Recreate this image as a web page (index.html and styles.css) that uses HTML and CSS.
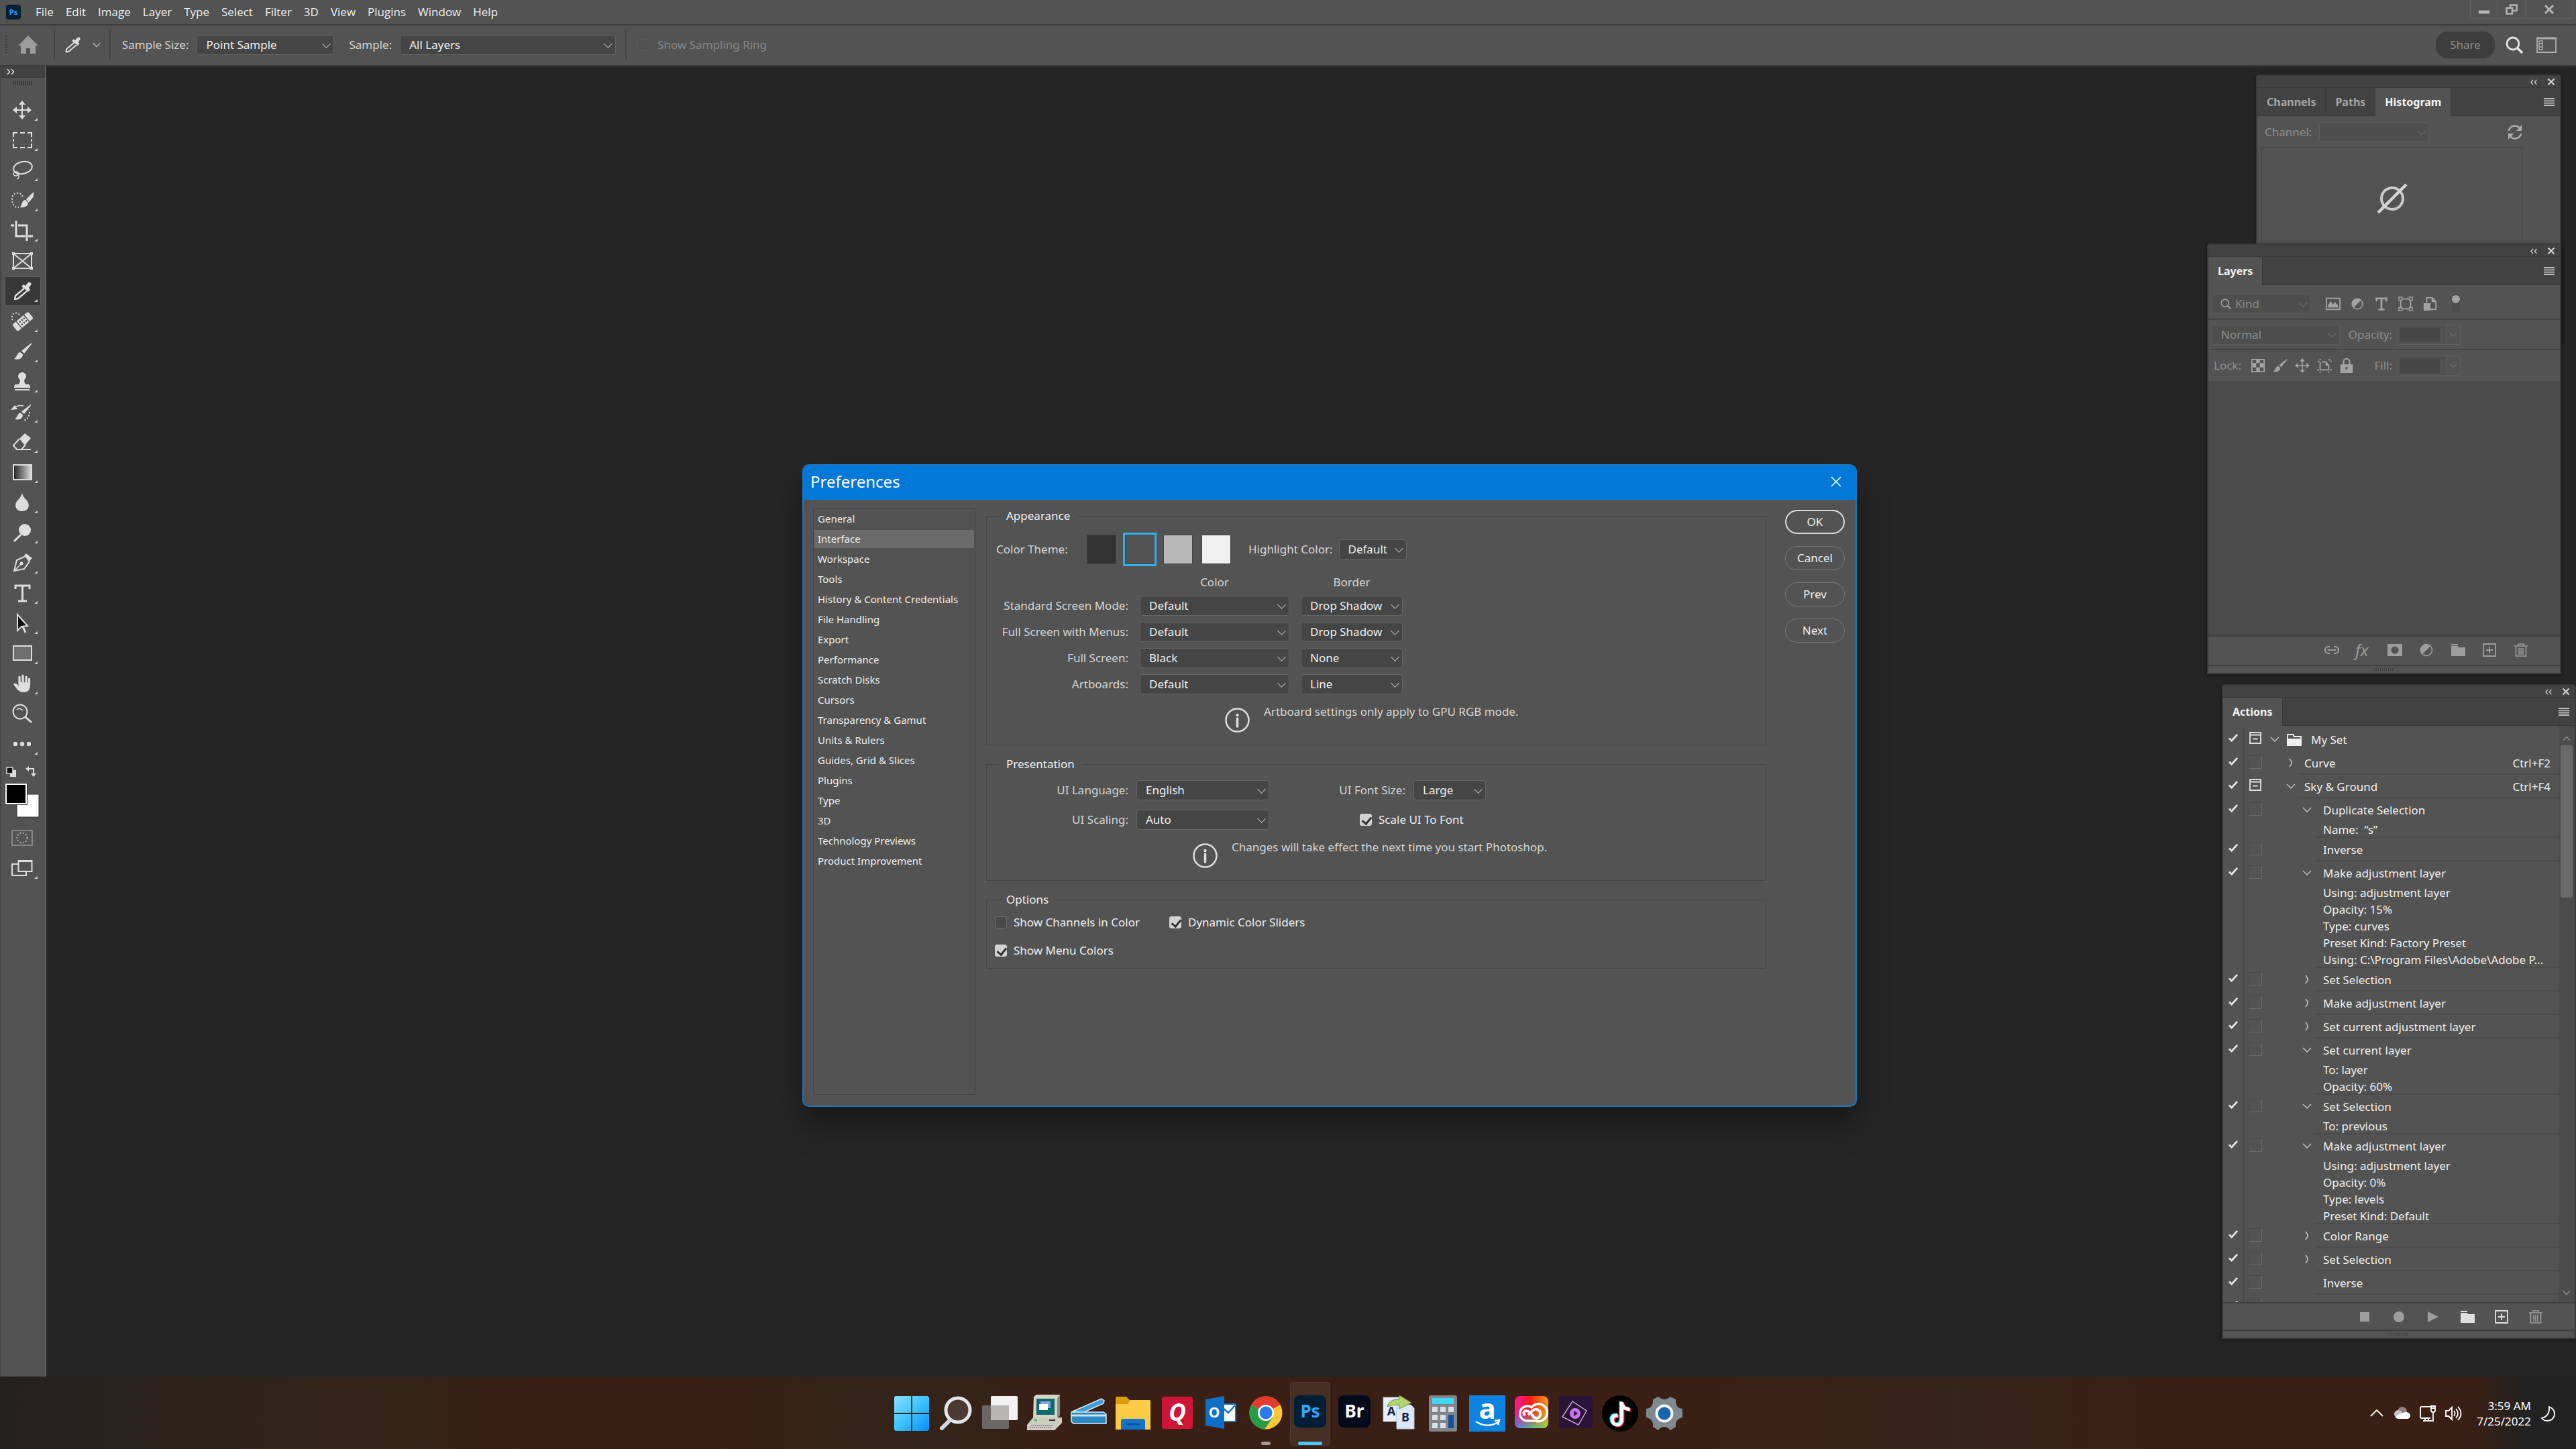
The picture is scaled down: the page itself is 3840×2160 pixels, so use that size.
FILE: index.html
```html
<!DOCTYPE html>
<html lang="en">
<head>
    <meta charset="UTF-8">
    <meta name="viewport" content="width=device-width, initial-scale=1.0">
    <title>Photoshop - Preferences</title>
    <link rel="stylesheet" href="styles.css">
</head>
<body>
    <!-- Shared icons -->
    <svg class="sprite" aria-hidden="true">
        <symbol id="i-eyedropper" viewBox="0 0 30 28">
            <path d="M18 10 5 21l-1 5 5-1L22 14" fill="none" stroke="currentColor" stroke-width="2.4" stroke-linejoin="round"/>
            <path d="M14 7l3-3 3 2 3-4c3-3 7 0 5 3l-3 4 2 3-3 3z" fill="currentColor"/>
        </symbol>
        <symbol id="i-tick" viewBox="0 0 16 14">
            <path d="M1 8l4 4L14 2" fill="none" stroke="currentColor" stroke-width="3"/>
        </symbol>
        <symbol id="i-close" viewBox="0 0 16 16">
            <path d="M2 2l12 12M14 2 2 14" fill="none" stroke="currentColor" stroke-width="3"/>
        </symbol>
        <symbol id="i-collapse" viewBox="0 0 12 10">
            <path d="M5 1 1.500 5 5 9M11 1 7.500 5 11 9" fill="none" stroke="currentColor" stroke-width="1.500"/>
        </symbol>
        <symbol id="i-menu" viewBox="0 0 16 12">
            <path d="M0 1h16M0 4.300h16M0 7.600h16M0 11h16" stroke="currentColor" stroke-width="1.800"/>
        </symbol>
        <symbol id="i-half" viewBox="0 0 24 24">
            <circle cx="12" cy="12" r="8.500" fill="none" stroke="currentColor" stroke-width="1.600"/>
            <path d="M18 6A8.500 8.500 0 1 0 6 18z" fill="currentColor"/>
        </symbol>
        <symbol id="i-folder" viewBox="0 0 24 24">
            <path d="M2 4h10" stroke="currentColor" stroke-width="2"/>
            <path d="M2 6h10l1 2h10v13H2z" fill="currentColor"/>
        </symbol>
        <symbol id="i-new" viewBox="0 0 24 24">
            <path d="M3 3h18v18H3zM12 7v10M7 12h10" fill="none" stroke="currentColor" stroke-width="1.800"/>
        </symbol>
        <symbol id="i-trash" viewBox="0 0 24 24">
            <path d="M2 6h20M8 6V3h8v3M4.500 6v15h15V6M9 9v10M12 9v10M15 9v10" fill="none" stroke="currentColor" stroke-width="1.600"/>
        </symbol>
        <symbol id="i-brush" viewBox="0 0 28 28">
            <path d="M27 1 12 13l4 4L27 3zM10 15c-5 1-4 7-9 10 6 2 13 0 13-7z" fill="currentColor"/>
        </symbol>
        <symbol id="i-move" viewBox="0 0 28 28">
            <path d="M14 4v20M4 14h20" stroke="currentColor" stroke-width="2"/>
            <path d="M14 0l5 6H9zM14 28l5-6H9zM0 14l6-5v10zM28 14l-6-5v10z" fill="currentColor"/>
        </symbol>
        <symbol id="i-info" viewBox="0 0 37 37">
            <circle cx="18.500" cy="18.500" r="17" fill="none" stroke="currentColor" stroke-width="2.500"/>
            <circle cx="18.500" cy="11" r="2.200" fill="currentColor"/>
            <path d="M18.500 16v12" stroke="currentColor" stroke-width="3.600" stroke-linecap="round"/>
        </symbol>
        <symbol id="i-search" viewBox="0 0 26 26">
            <circle cx="11" cy="11" r="9" fill="none" stroke="currentColor" stroke-width="2.800"/>
            <path d="M17 17l8 8" stroke="currentColor" stroke-width="3.400"/>
        </symbol>
        <symbol id="i-down" viewBox="0 0 14 8">
            <path d="M1 1l6 6 6-6" fill="none" stroke="currentColor" stroke-width="1.300"/>
        </symbol>
        <symbol id="i-right" viewBox="0 0 14 14">
            <path d="M5 1c4 5 4 7 0 12" fill="none" stroke="currentColor" stroke-width="1.500"/>
        </symbol>
        <symbol id="i-dialog" viewBox="0 0 18 18">
            <path d="M1 1h16v16H1zM1 4.500h16M5.500 10.500h7" fill="none" stroke="currentColor" stroke-width="1.800"/>
        </symbol>
    </svg>

    <div class="desktop">
        <header class="titlebar">
            <svg class="app-logo" viewBox="0 0 22 22"><rect width="22" height="22" rx="4" fill="#001e36"/><text x="11" y="15" text-anchor="middle" class="logo-text" font-size="11" fill="#31a8ff">Ps</text></svg>
            <nav class="menu">
                <a href="#">File</a><a href="#">Edit</a><a href="#">Image</a><a href="#">Layer</a><a href="#">Type</a><a href="#">Select</a><a href="#">Filter</a><a href="#">3D</a><a href="#">View</a><a href="#">Plugins</a><a href="#">Window</a><a href="#">Help</a>
            </nav>
            <div class="window-buttons">
                <button type="button" aria-label="Minimize"><svg width="16" height="16" viewBox="0 0 16 16"><path d="M0 12h16" stroke="currentColor" stroke-width="5"/></svg></button>
                <button type="button" aria-label="Restore"><svg width="18" height="16" viewBox="0 0 18 16"><path d="M7 6V1.500h9.500V10H11M1.500 6H10v8.500H1.500z" fill="none" stroke="currentColor" stroke-width="2.600"/></svg></button>
                <button type="button" class="wide" aria-label="Close"><svg width="16" height="16"><use href="#i-close"/></svg></button>
            </div>
        </header>

        <div class="optionsbar">
            <span class="grip-v"></span>
            <button type="button" class="home" aria-label="Home"><svg width="30" height="28" viewBox="0 0 30 28"><path d="M15 0 30 15h-4v12h-8v-8h-6v8H4V15H0z" fill="#9b9b9b"/></svg></button>
            <span class="divider"></span>
            <button type="button" class="current-tool" aria-label="Eyedropper tool presets">
                <svg width="26" height="26"><use href="#i-eyedropper"/></svg>
                <svg width="12" height="8"><use href="#i-down"/></svg>
            </button>
            <span class="divider"></span>
            <label for="sample-size" class="first-label">Sample Size:</label>
            <span class="select w-size"><select id="sample-size"><option>Point Sample</option></select></span>
            <label for="sample" class="second-label">Sample:</label>
            <span class="select w-sample"><select id="sample"><option>All Layers</option></select></span>
            <span class="divider"></span>
            <label class="check muted"><input type="checkbox" disabled>Show Sampling Ring</label>
            <div class="options-right">
                <button type="button" class="share" disabled>Share</button>
                <button type="button" aria-label="Search"><svg width="26" height="26"><use href="#i-search"/></svg></button>
                <button type="button" class="ws" aria-label="Workspace"><svg width="30" height="24" viewBox="0 0 30 24"><path d="M1 2h28v21H1z" fill="none" stroke="currentColor" stroke-width="1.800"/><path d="M0 2h30" stroke="currentColor" stroke-width="3"/><path d="M4 6h5v13H4zM4 10h5M4 15h5" fill="none" stroke="currentColor" stroke-width="1.500"/></svg></button>
            </div>
        </div>

        <main class="workspace">
            <aside class="toolbar">
                <div class="toolbar-head"><svg width="12" height="10" viewBox="0 0 12 10"><path d="M1 1l3.500 4L1 9M7 1l3.500 4L7 9" fill="none" stroke="#e0e0e0" stroke-width="1.500"/></svg></div>
                <div class="grip-h"></div>
                <div class="tools">
                    <button type="button" class="tool" aria-label="Move"><svg viewBox="0 0 54 44"><use href="#i-move" x="12" y="8" width="28" height="28"/></svg></button>
                    <button type="button" class="tool" aria-label="Rectangular Marquee"><svg viewBox="0 0 54 44"><path d="M19 11h-6v6M23 11h7M34 11h6v6M40 20v4M40 27v6h-6M30 33h-7M19 33h-6v-6M13 24v-4" class="line"/></svg></button>
                    <button type="button" class="tool" aria-label="Lasso"><svg viewBox="0 0 54 44"><ellipse cx="27" cy="18" rx="14" ry="9" transform="rotate(-12 27 18)" class="line"/><ellipse cx="17" cy="27" rx="4" ry="3" class="line thin"/><path d="M14 24l7 5q1 5-3 6" class="line thin"/></svg></button>
                    <button type="button" class="tool" aria-label="Quick Selection"><svg viewBox="0 0 54 44"><path d="M27 16c-2-4-5-6-9-5-6 1-7 5-7 10s3 12 10 11" class="line dots"/><path d="M43 9 32 20l4 5 7-9zM31 21c-6 1-5 7-8 11 7 1 12-2 12-7z" fill="currentColor"/></svg></button>
                    <button type="button" class="tool" aria-label="Crop"><svg viewBox="0 0 54 44"><path d="M9 14h5M17 7v23h14M35 30h7M20 14h13v23" class="line thick"/></svg></button>
                    <button type="button" class="tool plain" aria-label="Frame"><svg viewBox="0 0 54 44"><path d="M13 11h27v22H13zM13 11l27 22M40 11 13 33" class="line"/><path d="M11 9h4v4h-4zM38 9h4v4h-4zM11 31h4v4h-4zM38 31h4v4h-4z" fill="currentColor"/></svg></button>
                    <button type="button" class="tool active" aria-label="Eyedropper"><svg viewBox="0 0 54 44"><use href="#i-eyedropper" x="11" y="8" width="30" height="28"/></svg></button>
                    <button type="button" class="tool" aria-label="Spot Healing Brush"><svg viewBox="0 0 54 44"><path d="M22 12c-4-5-12-2-11 4 0 2 0 4 2 6" class="line dots"/><g transform="rotate(-40 27 23)"><rect x="12" y="16" width="31" height="13" rx="3" fill="currentColor"/><path d="M20 15v15M35 15v15" stroke="#535353" stroke-width="1.500"/><path d="M23 20h10M23 25h10" stroke="#444" stroke-width="2.500" stroke-dasharray="2 2"/></g></svg></button>
                    <button type="button" class="tool" aria-label="Brush"><svg viewBox="0 0 54 44"><use href="#i-brush" x="13" y="8" width="28" height="28"/></svg></button>
                    <button type="button" class="tool" aria-label="Clone Stamp"><svg viewBox="0 0 54 44"><circle cx="26" cy="14" r="6" fill="currentColor"/><path d="M23 18h6q0 7 3 8h4q2 1 2 5H14q0-4 2-5h4q3-1 3-8z" fill="currentColor"/><path d="M15 34h22" class="line"/></svg></button>
                    <button type="button" class="tool" aria-label="History Brush"><svg viewBox="0 0 54 44"><path d="M9 19l6-7 4 6z" fill="currentColor"/><path d="M14 16q6-5 14-3" class="line thin"/><path d="M37 22q0 9-8 13" class="line dots"/><use href="#i-brush" x="14" y="9" width="26" height="27"/></svg></button>
                    <button type="button" class="tool" aria-label="Eraser"><svg viewBox="0 0 54 44"><path d="M22 17l8-8 9 7-9 11z" fill="currentColor"/><path d="M22 17 13 27l5 6h7l6-7M20 33h19" class="line"/></svg></button>
                    <button type="button" class="tool" aria-label="Gradient"><svg viewBox="0 0 54 44"><defs><linearGradient id="tool-grad"><stop offset="0" stop-color="#222"/><stop offset="1" stop-color="#ddd"/></linearGradient></defs><path d="M13 11h27v22H13z" fill="url(#tool-grad)" stroke="currentColor" stroke-width="2"/></svg></button>
                    <button type="button" class="tool" aria-label="Blur"><svg viewBox="0 0 54 44"><path d="M26 8q1 5 6 10c7 7 4 17-6 17s-13-10-6-17q5-5 6-10z" fill="currentColor"/></svg></button>
                    <button type="button" class="tool" aria-label="Dodge"><svg viewBox="0 0 54 44"><circle cx="30" cy="18" r="9" fill="currentColor"/><path d="M24 25 14 35" class="line thick"/></svg></button>
                    <button type="button" class="tool" aria-label="Pen"><svg viewBox="0 0 54 44"><path d="M14 34l4-16 13-6 6 8-8 11z" class="line"/><path d="M14 34l10-10" class="line thin"/><circle cx="25" cy="23" r="2.500" fill="currentColor"/><path d="M32 8l9 7-4 4-8-8z" fill="currentColor"/></svg></button>
                    <button type="button" class="tool" aria-label="Type"><svg viewBox="0 0 54 44"><path d="M16 16v-5h21v5M26.500 11v22M20 34h13" class="line thick"/></svg></button>
                    <button type="button" class="tool" aria-label="Path Selection"><svg viewBox="0 0 54 44"><path d="M19 9v24l6-6 9-1z" fill="#111" stroke="currentColor" stroke-width="2"/><path d="M27 27l4 9" class="line thick"/></svg></button>
                    <button type="button" class="tool" aria-label="Rectangle"><svg viewBox="0 0 54 44"><path d="M13 11h27v21H13z" fill="#6e6e6e" stroke="currentColor" stroke-width="2"/></svg></button>
                    <button type="button" class="tool" aria-label="Hand"><svg viewBox="0 0 54 44"><path d="M22 23V12M27 21V10M32 22V12M36.500 24v-9" stroke="currentColor" stroke-width="3.200" stroke-linecap="round"/><path d="M38 21c0 8-1 14-10 14-8 0-11-7-15-12 1-2 4-2 8 2v-6z" fill="currentColor"/></svg></button>
                    <button type="button" class="tool plain" aria-label="Zoom"><svg viewBox="0 0 54 44"><circle cx="23" cy="19" r="10.500" class="line"/><path d="M18 16q4-4 9 1" class="line thin"/><path d="M30 26l10 9" class="line thick"/></svg></button>
                    <button type="button" class="tool" aria-label="Edit Toolbar"><svg viewBox="0 0 54 44"><circle cx="16" cy="22" r="3.200" fill="currentColor"/><circle cx="26" cy="22" r="3.200" fill="currentColor"/><circle cx="36" cy="22" r="3.200" fill="currentColor"/></svg></button>
                </div>
                <svg class="swatches" viewBox="0 0 54 90" role="img" aria-label="Foreground and background colors">
                    <path d="M8 2h9v10H8z" fill="#ddd"/><path d="M3-2h9v9H3z" fill="#111" stroke="#ddd" stroke-width="1.500"/>
                    <path d="M34 0h9v10" fill="none" stroke="#ddd" stroke-width="2"/><path d="M31 0l5-4v8zM43 12l-4-5h8z" fill="#ddd"/>
                    <path d="M18 38h33v34H18z" fill="#fff" stroke="#333" stroke-width="1"/>
                    <path d="M0 21h34v33H0z" fill="#333"/><path d="M2 23h30v29H2z" fill="#000" stroke="#fff" stroke-width="2"/>
                </svg>
                <div class="modes">
                    <button type="button" class="tool plain" aria-label="Quick Mask"><svg viewBox="0 0 54 44"><path d="M11 11h30v22H11z" fill="none" stroke="#999" stroke-width="1.500"/><circle cx="26" cy="22" r="7.500" fill="none" stroke="#bbb" stroke-width="1.800" stroke-dasharray="2 2.500"/></svg></button>
                    <button type="button" class="tool" aria-label="Screen Mode"><svg viewBox="0 0 54 44"><path d="M20 16h-9v17h21v-6" class="line"/><path d="M20.500 11h20v16h-20zM20 12h21" class="line"/></svg></button>
                </div>
            </aside>

            <section class="panel histogram">
                <div class="panel-head"><svg width="12" height="9"><use href="#i-collapse"/></svg><svg width="12" height="12"><use href="#i-close"/></svg></div>
                <div class="tabs">
                    <button type="button">Channels</button><button type="button">Paths</button><button type="button" class="current">Histogram</button>
                    <svg class="panel-menu" width="16" height="12"><use href="#i-menu"/></svg>
                </div>
                <div class="histogram-row">
                    <label for="channel">Channel:</label>
                    <span class="select off w-channel"><select id="channel" disabled></select></span>
                    <svg class="refresh" width="22" height="22" viewBox="0 0 22 22"><path d="M2 9a9 9 0 0 1 16-4M20 13a9 9 0 0 1-16 4" fill="none" stroke="currentColor" stroke-width="2.500"/><path d="M21 0v9h-8zM1 22v-9h8z" fill="currentColor"/></svg>
                </div>
                <div class="graph"><svg width="46" height="46" viewBox="0 0 46 46"><circle cx="23" cy="23" r="16" fill="none" stroke="#c9c9c9" stroke-width="4"/><path d="M2 44 44 2" stroke="#d4d4d4" stroke-width="4.500"/></svg></div>
            </section>

            <section class="panel layers">
                <div class="panel-head"><svg width="12" height="9"><use href="#i-collapse"/></svg><svg width="12" height="12"><use href="#i-close"/></svg></div>
                <div class="tabs">
                    <button type="button" class="current">Layers</button>
                    <svg class="panel-menu" width="16" height="12"><use href="#i-menu"/></svg>
                </div>
                <div class="layer-row filter">
                    <span class="select off w-kind"><svg class="kind-icon" width="16" height="16"><use href="#i-search"/></svg><select aria-label="Filter type" disabled><option>Kind</option></select></span>
                    <div class="filter-icons">
                        <svg viewBox="0 0 24 24"><path d="M1 3h22v18H1z" fill="none" stroke="currentColor" stroke-width="2"/><path d="M4 18v-4l4-6 4 5 3-4 5 6v3z" fill="currentColor"/></svg>
                        <svg viewBox="0 0 24 24"><use href="#i-half"/></svg>
                        <svg viewBox="0 0 24 24"><path d="M4 8V3h16v5M12 3v18M7 21h10" fill="none" stroke="currentColor" stroke-width="3"/></svg>
                        <svg viewBox="0 0 24 24"><path d="M4 4h16v16H4z" fill="none" stroke="currentColor" stroke-width="2"/><path d="M1 1h5v5H1zM18 1h5v5h-5zM1 18h5v5H1zM18 18h5v5h-5z" fill="#535353" stroke="currentColor" stroke-width="1.500"/></svg>
                        <svg viewBox="0 0 24 24"><path d="M7 10V2h9l6 6v13H13" fill="none" stroke="currentColor" stroke-width="2"/><path d="M15 2v7h7M2 11h11v12H2z" fill="currentColor"/></svg>
                    </div>
                    <span class="toggle"></span>
                </div>
                <div class="layer-row">
                    <span class="select off w-blend"><select aria-label="Blend mode" disabled><option>Normal</option></select></span>
                    <div class="field"><label for="opacity">Opacity:</label><span class="stepper"><input id="opacity" type="text" disabled><svg width="12" height="8"><use href="#i-down"/></svg></span></div>
                </div>
                <div class="layer-row lock">
                    <span class="lock-label">Lock:</span>
                    <div class="lock-icons">
                        <svg viewBox="0 0 24 24"><path d="M2 2h20v20H2z" fill="none" stroke="currentColor" stroke-width="2"/><path d="M9 2h6v6H9zM3 8h6v7H3zM15 8h6v7h-6zM9 15h6v7H9z" fill="currentColor"/></svg>
                        <svg viewBox="0 0 24 24"><use href="#i-brush"/></svg>
                        <svg viewBox="0 0 24 24"><use href="#i-move"/></svg>
                        <svg viewBox="0 0 24 24"><path d="M1 5h3M5 1v2M5 6v13h14v-7l-5-6H8M20 1v3M22 5h2M5 22v2M19 22v2M0 19h3M21 19h3" fill="none" stroke="currentColor" stroke-width="2"/><path d="M14 5v7h6z" fill="currentColor"/></svg>
                        <svg viewBox="0 0 24 24"><path d="M7 11V6a5 5 0 0 1 10 0v5" fill="none" stroke="currentColor" stroke-width="2.500"/><path d="M2 10h20v14H2z" fill="currentColor"/><circle cx="12" cy="16" r="2" fill="#535353"/></svg>
                    </div>
                    <div class="field"><label for="fill">Fill:</label><span class="stepper"><input id="fill" type="text" disabled><svg width="12" height="8"><use href="#i-down"/></svg></span></div>
                </div>
                <div class="layer-list"></div>
                <div class="panel-foot">
                    <svg viewBox="0 0 24 24"><path d="M9 7H7a5 5 0 0 0 0 10h2M15 7h2a5 5 0 0 1 0 10h-2M6 12h12" fill="none" stroke="currentColor" stroke-width="2.200"/></svg>
                    <span class="fx">fx</span>
                    <svg viewBox="0 0 24 24"><path d="M1 3h22v18H1z" fill="currentColor"/><circle cx="12" cy="12" r="5.500" fill="#535353"/></svg>
                    <svg viewBox="0 0 24 24"><use href="#i-half"/></svg>
                    <svg viewBox="0 0 24 24"><use href="#i-folder"/></svg>
                    <svg viewBox="0 0 24 24"><use href="#i-new"/></svg>
                    <svg viewBox="0 0 24 24"><use href="#i-trash"/></svg>
                </div>
                <div class="panel-grip"></div>
            </section>

            <section class="panel actions">
                <div class="panel-head"><svg width="12" height="9"><use href="#i-collapse"/></svg><svg width="12" height="12"><use href="#i-close"/></svg></div>
                <div class="tabs">
                    <button type="button" class="current">Actions</button>
                    <svg class="panel-menu" width="16" height="12"><use href="#i-menu"/></svg>
                </div>
                <div class="actions-body">
                    <ul class="action-list">
                        <li class="set"><span class="on"><svg><use href="#i-tick"/></svg></span><span class="dlg"><svg><use href="#i-dialog"/></svg></span><svg class="caret"><use href="#i-down"/></svg><div class="step"><div class="name"><svg class="set-folder" viewBox="0 0 22 18"><path d="M1 8V1h8l2 3h10v4" fill="none" stroke="currentColor" stroke-width="1.800"/><path d="M0 7h22v11H0z" fill="currentColor"/></svg>My Set</div></div></li>
                        <li class="action"><span class="on"><svg><use href="#i-tick"/></svg></span><span class="dlg"><i></i></span><svg class="caret"><use href="#i-right"/></svg><div class="step"><div class="name">Curve<kbd>Ctrl+F2</kbd></div></div></li>
                        <li class="action"><span class="on"><svg><use href="#i-tick"/></svg></span><span class="dlg"><svg><use href="#i-dialog"/></svg></span><svg class="caret"><use href="#i-down"/></svg><div class="step"><div class="name">Sky &amp; Ground<kbd>Ctrl+F4</kbd></div></div></li>
                        <li><span class="on"><svg><use href="#i-tick"/></svg></span><span class="dlg"><i></i></span><svg class="caret"><use href="#i-down"/></svg><div class="step"><div class="name">Duplicate Selection</div><p>Name:&nbsp; “s”</p></div></li>
                        <li><span class="on"><svg><use href="#i-tick"/></svg></span><span class="dlg"><i></i></span><svg class="caret"></svg><div class="step"><div class="name">Inverse</div></div></li>
                        <li><span class="on"><svg><use href="#i-tick"/></svg></span><span class="dlg"><i></i></span><svg class="caret"><use href="#i-down"/></svg><div class="step"><div class="name">Make adjustment layer</div><p>Using: adjustment layer</p><p>Opacity: 15%</p><p>Type: curves</p><p>Preset Kind: Factory Preset</p><p>Using: C:\Program Files\Adobe\Adobe P...</p></div></li>
                        <li><span class="on"><svg><use href="#i-tick"/></svg></span><span class="dlg"><i></i></span><svg class="caret"><use href="#i-right"/></svg><div class="step"><div class="name">Set Selection</div></div></li>
                        <li><span class="on"><svg><use href="#i-tick"/></svg></span><span class="dlg"><i></i></span><svg class="caret"><use href="#i-right"/></svg><div class="step"><div class="name">Make adjustment layer</div></div></li>
                        <li><span class="on"><svg><use href="#i-tick"/></svg></span><span class="dlg"><i></i></span><svg class="caret"><use href="#i-right"/></svg><div class="step"><div class="name">Set current adjustment layer</div></div></li>
                        <li><span class="on"><svg><use href="#i-tick"/></svg></span><span class="dlg"><i></i></span><svg class="caret"><use href="#i-down"/></svg><div class="step"><div class="name">Set current layer</div><p>To: layer</p><p>Opacity: 60%</p></div></li>
                        <li><span class="on"><svg><use href="#i-tick"/></svg></span><span class="dlg"><i></i></span><svg class="caret"><use href="#i-down"/></svg><div class="step"><div class="name">Set Selection</div><p>To: previous</p></div></li>
                        <li><span class="on"><svg><use href="#i-tick"/></svg></span><span class="dlg"><i></i></span><svg class="caret"><use href="#i-down"/></svg><div class="step"><div class="name">Make adjustment layer</div><p>Using: adjustment layer</p><p>Opacity: 0%</p><p>Type: levels</p><p>Preset Kind: Default</p></div></li>
                        <li><span class="on"><svg><use href="#i-tick"/></svg></span><span class="dlg"><i></i></span><svg class="caret"><use href="#i-right"/></svg><div class="step"><div class="name">Color Range</div></div></li>
                        <li><span class="on"><svg><use href="#i-tick"/></svg></span><span class="dlg"><i></i></span><svg class="caret"><use href="#i-right"/></svg><div class="step"><div class="name">Set Selection</div></div></li>
                        <li><span class="on"><svg><use href="#i-tick"/></svg></span><span class="dlg"><i></i></span><svg class="caret"></svg><div class="step"><div class="name">Inverse</div></div></li>
                        <li><span class="on"><svg><use href="#i-tick"/></svg></span><span class="dlg"><i></i></span><svg class="caret"></svg><div class="step"><div class="name">Make adjustment layer</div></div></li>
                    </ul>
                    <div class="scrollbar">
                        <svg class="up" width="12" height="8"><use href="#i-down"/></svg>
                        <div class="thumb"></div>
                        <svg width="12" height="8"><use href="#i-down"/></svg>
                    </div>
                </div>
                <div class="panel-foot">
                    <svg viewBox="0 0 24 24"><path d="M5 5h14v14H5z" fill="currentColor"/></svg>
                    <svg viewBox="0 0 24 24"><circle cx="12" cy="12" r="8" fill="currentColor"/></svg>
                    <svg viewBox="0 0 24 24"><path d="M4 4l16 8-16 8z" fill="currentColor"/></svg>
                    <svg class="bright" viewBox="0 0 24 24"><use href="#i-folder"/></svg>
                    <svg class="bright" viewBox="0 0 24 24"><use href="#i-new"/></svg>
                    <svg viewBox="0 0 24 24"><use href="#i-trash"/></svg>
                </div>
                <div class="panel-grip"></div>
            </section>

            <section class="dialog" role="dialog" aria-labelledby="dialog-title">
                <div class="dialog-title">
                    <h1 id="dialog-title">Preferences</h1>
                    <button type="button" aria-label="Close"><svg width="16" height="16" viewBox="0 0 16 16"><path d="M1 1l14 14M15 1 1 15" stroke="#fff" stroke-width="1.500"/></svg></button>
                </div>
                <div class="dialog-body">
                    <nav class="pages">
                        <a href="#">General</a>
                        <a href="#" class="selected">Interface</a>
                        <a href="#">Workspace</a>
                        <a href="#">Tools</a>
                        <a href="#">History &amp; Content Credentials</a>
                        <a href="#">File Handling</a>
                        <a href="#">Export</a>
                        <a href="#">Performance</a>
                        <a href="#">Scratch Disks</a>
                        <a href="#">Cursors</a>
                        <a href="#">Transparency &amp; Gamut</a>
                        <a href="#">Units &amp; Rulers</a>
                        <a href="#">Guides, Grid &amp; Slices</a>
                        <a href="#">Plugins</a>
                        <a href="#">Type</a>
                        <a href="#">3D</a>
                        <a href="#">Technology Previews</a>
                        <a href="#">Product Improvement</a>
                    </nav>

                    <form class="settings">
                        <fieldset>
                            <legend>Appearance</legend>
                            <div class="theme-row">
                                <span class="theme-label">Color Theme:</span>
                                <div class="themes">
                                    <input type="radio" name="theme" class="theme darkest" aria-label="Darkest">
                                    <input type="radio" name="theme" class="theme dark" aria-label="Dark" checked>
                                    <input type="radio" name="theme" class="theme light" aria-label="Light">
                                    <input type="radio" name="theme" class="theme lightest" aria-label="Lightest">
                                </div>
                                <label for="highlight">Highlight Color:</label>
                                <span class="select w-highlight"><select id="highlight"><option>Default</option></select></span>
                            </div>
                            <div class="screen-head"><span>Color</span><span>Border</span></div>
                            <div class="screen-grid">
                                <label for="std-color">Standard Screen Mode:</label>
                                <span class="select"><select id="std-color"><option>Default</option></select></span>
                                <span class="select"><select aria-label="Standard border"><option>Drop Shadow</option></select></span>
                                <label for="menu-color">Full Screen with Menus:</label>
                                <span class="select"><select id="menu-color"><option>Default</option></select></span>
                                <span class="select"><select aria-label="Menus border"><option>Drop Shadow</option></select></span>
                                <label for="full-color">Full Screen:</label>
                                <span class="select"><select id="full-color"><option>Black</option></select></span>
                                <span class="select"><select aria-label="Full screen border"><option>None</option></select></span>
                                <label for="art-color">Artboards:</label>
                                <span class="select"><select id="art-color"><option>Default</option></select></span>
                                <span class="select"><select aria-label="Artboards border"><option>Line</option></select></span>
                            </div>
                            <div class="note artboard-note"><svg width="37" height="37"><use href="#i-info"/></svg><p>Artboard settings only apply to GPU RGB mode.</p></div>
                        </fieldset>

                        <fieldset>
                            <legend>Presentation</legend>
                            <div class="ui-grid">
                                <label for="language">UI Language:</label>
                                <span class="select"><select id="language"><option>English</option></select></span>
                                <label for="font-size">UI Font Size:</label>
                                <span class="select"><select id="font-size"><option>Large</option></select></span>
                                <label for="scaling">UI Scaling:</label>
                                <span class="select"><select id="scaling"><option>Auto</option></select></span>
                                <label class="check scale-font"><input type="checkbox" checked>Scale UI To Font</label>
                            </div>
                            <div class="note restart-note"><svg width="37" height="37"><use href="#i-info"/></svg><p>Changes will take effect the next time you start Photoshop.</p></div>
                        </fieldset>

                        <fieldset class="options">
                            <legend>Options</legend>
                            <div class="option-grid">
                                <label class="check"><input type="checkbox">Show Channels in Color</label>
                                <label class="check"><input type="checkbox" checked>Dynamic Color Sliders</label>
                                <label class="check"><input type="checkbox" checked>Show Menu Colors</label>
                            </div>
                        </fieldset>
                    </form>

                    <div class="dialog-buttons">
                        <button type="button" class="primary">OK</button>
                        <button type="button">Cancel</button>
                        <button type="button">Prev</button>
                        <button type="button">Next</button>
                    </div>
                </div>
            </section>
        </main>

        <footer class="taskbar">
            <div class="taskbar-apps">
                <button type="button" aria-label="Start"><svg viewBox="0 0 52 52"><defs><linearGradient id="win" x1="0" y1="0" x2="1" y2="1"><stop offset="0" stop-color="#8be0ff"/><stop offset=".5" stop-color="#3cc3fb"/><stop offset="1" stop-color="#0a8dfb"/></linearGradient></defs><path d="M2 0h23v25H0V2zM27 0h23l2 2v23H27zM0 27h25v25H2l-2-2zM27 27h25v23l-2 2H27z" fill="url(#win)"/></svg></button>
                <button type="button" aria-label="Search"><svg viewBox="0 0 52 52"><circle cx="29" cy="21" r="18" fill="#4a3a32" stroke="#e6e6e8" stroke-width="5"/><path d="M17 36 5 48" stroke="#d8d8dc" stroke-width="6" stroke-linecap="round"/></svg></button>
                <button type="button" aria-label="Task View"><svg viewBox="0 0 52 52"><rect x="12" y="0" width="40" height="36" rx="2" fill="#f2f2f2"/><rect x="-1" y="14" width="40" height="35" rx="2" fill="#6a6866"/><path d="M12 14h27v22H12z" fill="#b8b6b4"/></svg></button>
                <button type="button" aria-label="Computer"><svg viewBox="0 0 52 52"><path d="M10 1 14-2h35v30l-4 5H9z" fill="#d6d3c8"/><path d="M45 3l4-5v31l-4 3z" fill="#8c897f"/><path d="M14 4h27v24H14z" fill="#0b6b6b"/><path d="M20 8h15v10H20z" fill="#8ea4ea"/><path d="M18 12h13v9H18z" fill="#fff"/><path d="M9 32h43v8L41 51H0v-8z" fill="#cfccc2"/><path d="M6 44h33M4 47h33" stroke="#777" stroke-width="1.500" stroke-dasharray="2 1"/><path d="M33 36h9" stroke="#333" stroke-width="2"/><path d="M11 36h4" stroke="#29b34a" stroke-width="2"/></svg></button>
                <button type="button" aria-label="Scanner"><svg viewBox="0 0 52 52"><path d="M2 23 45 4l4 3-1 4-31 14z" fill="#3a9fd8" stroke="#dfeaf0" stroke-width="1.500"/><path d="M0 24h48l4 3v14H3l-3-3z" fill="#2a8bc4" stroke="#dfeaf0" stroke-width="1.500"/><path d="M0 29h52" stroke="#d5e2ea" stroke-width="3"/></svg></button>
                <button type="button" aria-label="File Explorer"><svg viewBox="0 0 52 52"><path d="M0 3q0-2 2-2h14l5 5H52v10H0z" fill="#dc9c07"/><path d="M0 12h18l4-6h28l2 2v42H0z" fill="#fccb45"/><path d="M8 50V38q0-4 4-4h28q4 0 4 4v12z" fill="#1173cc"/><path d="M16 42h20" stroke="#0b4f94" stroke-width="2.500"/></svg></button>
                <button type="button" aria-label="Quicken"><svg viewBox="0 0 52 52"><rect x="3" y="1" width="46" height="48" rx="4" fill="#d01438"/><text x="26" y="37" text-anchor="middle" class="logo-text slanted" font-size="35" fill="#fff">Q</text></svg></button>
                <button type="button" aria-label="Outlook"><svg viewBox="0 0 52 52"><path d="M26 12h21v26H26z" fill="#fff" stroke="#0f74cf" stroke-width="2"/><path d="M27 17l9 8 11-12" fill="none" stroke="#0f74cf" stroke-width="2.500"/><path d="M2 5l28-5v49L2 44z" fill="#0f6fc6"/><text x="15" y="32" text-anchor="middle" class="logo-text" font-size="21" fill="#fff">O</text></svg></button>
                <button type="button" class="running" aria-label="Chrome"><svg viewBox="0 0 52 52"><circle cx="26" cy="25" r="24.500" fill="#fcc934"/><path d="M26 25 4.500 13A24.500 24.500 0 0 1 47.500 13z" fill="#e33b2e"/><path d="M4.500 13A24.500 24.500 0 0 0 24 49.500L37 31 26 25z" fill="#2a9c47"/><circle cx="26" cy="25" r="12" fill="#fff"/><circle cx="26" cy="25" r="9.500" fill="#2b79ea"/></svg></button>
                <button type="button" class="focused" aria-label="Photoshop"><svg viewBox="0 0 52 52"><rect x="2" y="-1" width="48" height="48" rx="8" fill="#001e36"/><text x="26" y="32" text-anchor="middle" class="logo-text" font-size="26" fill="#31a8ff">Ps</text></svg></button>
                <button type="button" aria-label="Bridge"><svg viewBox="0 0 52 52"><rect x="2" y="-1" width="48" height="48" rx="8" fill="#020b1c"/><text x="26" y="32" text-anchor="middle" class="logo-text" font-size="26" fill="#fff">Br</text></svg></button>
                <button type="button" aria-label="Batch Rename"><svg viewBox="0 0 52 52"><path d="M3 2h24v36H3z" fill="#e8effc" stroke="#aebfe0"/><text x="15" y="29" text-anchor="middle" class="logo-text" font-size="18" fill="#14264f">A</text><path d="M23 13h21l5 5v31H23z" fill="#dde8fb" stroke="#aebfe0"/><text x="36" y="38" text-anchor="middle" class="logo-text" font-size="18" fill="#14264f">B</text><path d="M9 16Q12 4 27 5v-6l18 11-18 9v-6q-10-1-18 3z" fill="#b3d56f" stroke="#718f3b"/></svg></button>
                <button type="button" aria-label="Calculator"><svg viewBox="0 0 52 52"><rect x="5" y="-1" width="42" height="54" rx="3" fill="#80868c"/><path d="M10 3h32v9H10z" fill="#45d5f5"/><path d="M10 16h8v8h-8zM22 16h8v8h-8zM34 16h8v8h-8zM10 28h8v8h-8zM22 28h8v8h-8zM10 40h8v8h-8zM22 40h8v8h-8z" fill="#d8dee3"/><path d="M34 28h8v20h-8z" fill="#174f9b"/></svg></button>
                <button type="button" aria-label="Amazon"><svg viewBox="0 0 52 52"><path d="M-1-1h54v54H-1z" fill="#0c84df"/><text x="26" y="34" text-anchor="middle" class="logo-text" font-size="42" fill="#fff">a</text><path d="M9 38q17 11 33 1M37 37l7-1-2 7" fill="none" stroke="#fff" stroke-width="2.500"/></svg></button>
                <button type="button" aria-label="Creative Cloud"><svg viewBox="0 0 52 52"><defs><linearGradient id="cc" x2="1"><stop offset="0" stop-color="#f01a9c"/><stop offset=".45" stop-color="#fa1b1b"/><stop offset="1" stop-color="#ff9c10"/></linearGradient><linearGradient id="cc-low" x2="1"><stop offset="0" stop-color="#3f8cff"/><stop offset=".5" stop-color="#3fd0b0"/><stop offset="1" stop-color="#8fe03a"/></linearGradient><linearGradient id="cc-fade" x2="0" y2="1"><stop offset=".45" stop-color="#000"/><stop offset="1" stop-color="#fff"/></linearGradient><mask id="cc-mask"><rect width="52" height="52" fill="url(#cc-fade)"/></mask></defs><rect x="1" width="50" height="48" rx="8" fill="url(#cc)"/><rect x="1" width="50" height="48" rx="8" fill="url(#cc-low)" mask="url(#cc-mask)"/><path d="M19 37a11 11 0 1 1 7-20 13 13 0 1 1 6 20z" fill="none" stroke="#fff" stroke-width="3.500"/><path d="M16 29q-4-6 2-7 3 0 6 3l6 7q7 3 9-4 1-6-5-8-4-1-9 4l-4 4" fill="none" stroke="#fff" stroke-width="4"/></svg></button>
                <button type="button" aria-label="Elements"><svg viewBox="0 0 52 52"><rect x="1" width="50" height="48" rx="3" fill="#2a1238"/><path d="M21 8l21 14-12 21L6 31z" fill="none" stroke="#c9a8d8" stroke-width="1.500"/><circle cx="25" cy="26" r="8" fill="#c774ee"/><path d="M23 22l6 4-6 4z" fill="#2a1238"/></svg></button>
                <button type="button" aria-label="TikTok"><svg viewBox="0 0 52 52"><circle cx="26" cy="26" r="27" fill="#000"/><g fill="none" stroke-width="5"><path d="M27 8v27q-1 7-7 7t-7-7 8-7M27 9q1 9 12 10" stroke="#25f4ee"/><path d="M30 10v27q-1 7-7 7t-7-7 8-7M30 11q1 9 12 10" stroke="#fe2c55"/><path d="M28.500 9v27q-1 7-7 7t-7-7 8-7M28.500 10q1 9 12 10" stroke="#fff"/></g></svg></button>
                <button type="button" aria-label="Settings"><svg viewBox="0 0 52 52"><path d="M17 1q5 4 9 4t9-4l8 4q-1 13 10 14v13q-11 2-10 14l-8 5q-4-5-9-5t-9 5l-8-5q1-12-10-14V19Q10 18 9 5z" fill="#808990"/><circle cx="26" cy="26" r="11.500" fill="#1765ae" stroke="#f3f5f6" stroke-width="4"/></svg></button>
            </div>
            <div class="tray">
                <svg viewBox="0 0 24 24"><path d="M3 16l9-9 9 9" class="tray-line"/></svg>
                <svg viewBox="0 0 24 24"><circle cx="12" cy="9" r="7" fill="#8c8380"/><circle cx="6" cy="13" r="6" fill="#c9c4c2"/><path d="M3 19q-2-3 2-4l8-4q8-3 11 3 1 5-4 6H6z" fill="#fff"/></svg>
                <svg viewBox="0 0 24 24"><path d="M16 2H3q-2 0-2 2v13q0 2 2 2h13M8 19v4M13 19v4M5 23h14M17 1h6v7q0 2-3 2t-3-2zM17 4h6M20 10v14" class="tray-line"/></svg>
                <svg viewBox="0 0 24 24"><path d="M1 8v8h4l5 5V3L5 8zM13 8q3 4 0 8M16 5q6 7 0 14M19 2q9 10 0 20" class="tray-line"/></svg>
                <time class="clock">3:59 AM<br>7/25/2022</time>
                <svg viewBox="0 0 24 24"><path d="M13 2q9 4 8 12-2 9-11 9-5 0-8-4 12-3 11-17z" class="tray-line"/></svg>
            </div>
        </footer>
    </div>
</body>
</html>
```

FILE: styles.css
```css
:root {
    --bg: #535353;
    --dark: #424242;
    --line: #3c3c3c;
    --canvas: #262626;
    --text: #f0f0f0;
    --label: #d6d6d6;
    --off: #8c8c8c;
    --accent: #0078d7;
}

* {
    margin: 0;
    padding: 0;
    box-sizing: border-box;
}

body {
    font-family: "Noto Sans", "Open Sans", sans-serif;
    font-size: 17px;
    line-height: 24px;
    color: var(--text);
    background: var(--canvas);
}

button,
select,
input {
    font: inherit;
    color: inherit;
    background: none;
    border: none;
}

a {
    color: inherit;
    text-decoration: none;
}

svg {
    display: block;
    flex: none;
    overflow: visible;
}

.sprite {
    position: absolute;
    width: 0;
    height: 0;
}

.logo-text {
    font-family: "Noto Sans", sans-serif;
    font-weight: 700;
}

.slanted {
    font-style: italic;
}

.desktop {
    display: flex;
    flex-direction: column;
    height: 100vh;
    overflow: hidden;
}

/* Title bar */
.titlebar {
    display: flex;
    align-items: center;
    height: 38px;
    padding-left: 9px;
    background: var(--bg);
    border-bottom: 2px solid var(--line);
}

.app-logo {
    width: 22px;
    height: 22px;
}

.menu {
    display: flex;
    gap: 18px;
    margin-left: 22px;
    font-family: "Open Sans", sans-serif;
}

.window-buttons {
    display: flex;
    align-self: flex-start;
    height: 28px;
    margin-left: auto;
    margin-right: 4px;
    border: 1px solid #5f5f5f;
    border-top: none;
    border-radius: 0 0 4px 4px;
    color: #b4b4b4;
}

.window-buttons button {
    display: flex;
    align-items: center;
    justify-content: center;
    width: 41px;
    border-right: 1px solid #5f5f5f;
}

.window-buttons .wide {
    width: 70px;
    border-right: none;
}

/* Options bar */
.optionsbar {
    display: flex;
    align-items: center;
    height: 61px;
    padding: 0 29px 2px 8px;
    background: var(--bg);
    border-bottom: 2px solid var(--line);
    color: var(--label);
}

.grip-v {
    width: 3px;
    height: 28px;
    background: repeating-linear-gradient(#3e3e3e 0 2px, transparent 2px 4px);
}

.home {
    margin: 0 23px 0 16px;
}

.divider {
    width: 2px;
    height: 44px;
    background: #434343;
}

.current-tool {
    display: flex;
    align-items: center;
    gap: 17px;
    margin: 0 13px;
    color: #dcdcdc;
}

.first-label {
    margin: 0 12px 0 17px;
}

.second-label {
    margin: 0 12px 0 22px;
}

.optionsbar .select + .divider {
    margin: 0 16px 0 14px;
}

.optionsbar .check {
    gap: 12px;
}

.options-right {
    display: flex;
    align-items: center;
    gap: 16px;
    margin-left: auto;
    color: #e4e4e4;
}

.options-right .ws {
    margin-left: 4px;
    color: #b0b0b0;
}

.share {
    width: 88px;
    height: 40px;
    border-radius: 18px;
    background: #3d3d3d;
    color: var(--off);
}

/* Form controls */
.select {
    position: relative;
    display: block;
    height: 30px;
}

.select select {
    appearance: none;
    width: 100%;
    height: 30px;
    padding: 0 20px 0 13px;
    color: var(--text);
    background: #454545;
    border: 1px solid #646464;
    border-radius: 4px;
}

.select::after {
    content: '';
    position: absolute;
    top: 9px;
    right: 7px;
    width: 8px;
    height: 8px;
    border-right: 1px solid #c4c4c4;
    border-bottom: 1px solid #c4c4c4;
    transform: rotate(45deg);
    pointer-events: none;
}

.select.off select {
    opacity: 1;
    color: var(--off);
    background: #4e4e4e;
    border-color: #5c5c5c;
}

.select.off::after {
    border-color: #707070;
}

.w-size { width: 205px; }
.w-sample { width: 322px; }
.w-channel { width: 164px; }
.w-kind { width: 148px; }
.w-blend { width: 191px; }
.w-highlight { width: 101px; }

.check {
    display: flex;
    align-items: center;
    gap: 10px;
    color: var(--text);
}

.check input {
    appearance: none;
    position: relative;
    width: 18px;
    height: 18px;
    border: 1px solid #6e6e6e;
    border-radius: 3px;
    background: #484848;
}

.check input:checked {
    background: #d2d2d2;
    border-color: #d2d2d2;
}

.check input:checked::after {
    content: '';
    position: absolute;
    left: 5px;
    top: 1px;
    width: 6px;
    height: 11px;
    border: solid #333;
    border-width: 0 3px 3px 0;
    transform: rotate(40deg);
}

.check.muted {
    color: #868686;
}

.check.muted input {
    border-color: #5c5c5c;
    background: #505050;
}

/* Workspace and tools */
.workspace {
    flex: 1;
    display: flex;
    position: relative;
    min-height: 0;
    overflow: hidden;
    background: var(--canvas);
}

.toolbar {
    width: 69px;
    background: var(--bg);
    border-left: 2px solid #454545;
    border-right: 2px solid #5f5f5f;
}

.toolbar-head {
    height: 17px;
    padding: 3px 0 0 8px;
    background: var(--dark);
    border-bottom: 1px solid var(--line);
}

.grip-h {
    width: 30px;
    height: 6px;
    margin: 5px 0 0 17px;
    background: repeating-linear-gradient(90deg, #3e3e3e 0 2px, transparent 2px 3px);
}

.tools,
.modes {
    display: flex;
    flex-direction: column;
    gap: 1px;
    margin: 15px 0 0 5px;
}

.tool {
    position: relative;
    width: 54px;
    height: 44px;
    color: #dedede;
    border-radius: 4px;
}

.tool svg {
    width: 54px;
    height: 44px;
}

.tool::after {
    content: '';
    position: absolute;
    right: 5px;
    bottom: 6px;
    border-left: 5px solid transparent;
    border-bottom: 4px solid #d0d0d0;
}

.tool.plain::after {
    display: none;
}

.tool.active {
    background: #383838;
    box-shadow: inset 0 0 0 1px #606060;
}

.line {
    fill: none;
    stroke: currentColor;
    stroke-width: 2;
}

.line.thin {
    stroke-width: 1.5;
}

.line.thick {
    stroke-width: 3;
}

.line.dots {
    stroke-dasharray: 2 2.5;
}

.swatches {
    width: 54px;
    height: 90px;
    margin: 15px 0 0 5px;
}

.modes {
    margin-top: -9px;
}

/* Panels */
.panel {
    position: absolute;
    display: flex;
    flex-direction: column;
    background: var(--bg);
    border: 2px solid #3a3a3a;
    border-radius: 5px 5px 0 0;
    box-shadow: 0 2px 8px rgba(0, 0, 0, 0.4);
    color: #8f8f8f;
}

.histogram {
    top: 12px;
    right: 22px;
    width: 455px;
    height: 400px;
}

.layers {
    top: 264px;
    right: 22px;
    width: 528px;
    height: 642px;
}

.actions {
    top: 921px;
    right: 0;
    width: 528px;
    height: 976px;
    color: var(--text);
}

.panel-head {
    display: flex;
    align-items: center;
    justify-content: flex-end;
    gap: 14px;
    height: 18px;
    padding: 1px 7px 0 0;
    background: var(--dark);
    border-bottom: 1px solid #393939;
    color: #cfcfcf;
}

.tabs {
    display: flex;
    align-items: center;
    height: 42px;
    background: var(--dark);
    border-bottom: 1px solid #393939;
}

.tabs button {
    height: 42px;
    padding: 0 14px;
    font-size: 16px;
    font-weight: 700;
    color: #a6a6a6;
    border-right: 1px solid #393939;
}

.tabs .current {
    background: var(--bg);
    color: #f4f4f4;
}

.panel-menu {
    margin-left: auto;
    margin-right: 8px;
    color: #bcbcbc;
}

.histogram-row {
    display: flex;
    align-items: center;
    height: 46px;
    padding: 2px 0 0 11px;
}

.histogram-row .select {
    margin-left: 11px;
}

.refresh {
    margin-left: auto;
    margin-right: 56px;
    color: #ababab;
}

.graph {
    display: flex;
    justify-content: center;
    height: 250px;
    margin: 0 56px 0 6px;
    padding-top: 53px;
    border: 1px solid #424242;
}

.layer-row {
    display: flex;
    align-items: center;
    height: 45px;
    padding: 0 148px 0 5px;
    border-bottom: 2px solid #434343;
}

.layer-row.filter {
    height: 52px;
    padding-top: 6px;
}

.layer-row.lock {
    border-bottom: none;
    height: 46px;
}

.kind-icon {
    position: absolute;
    left: 13px;
    top: 7px;
    color: #a0a0a0;
}

.w-kind select {
    padding-left: 34px;
}

.filter-icons,
.lock-icons {
    display: flex;
    gap: 14px;
    margin-left: 22px;
    color: #a3a3a3;
}

.filter-icons svg,
.lock-icons svg {
    width: 22px;
    height: 22px;
}

.lock-label {
    padding-left: 3px;
    width: 58px;
}

.lock-icons {
    gap: 11px;
    margin-left: 0;
}

.toggle {
    flex: none;
    width: 12px;
    height: 26px;
    margin-left: 22px;
    border-radius: 6px;
    background: #4a4a4a;
}

.toggle::before {
    content: '';
    display: block;
    width: 12px;
    height: 12px;
    border-radius: 50%;
    background: #a3a3a3;
}

.field {
    display: flex;
    align-items: center;
    gap: 8px;
    margin-left: auto;
}

.stepper {
    display: flex;
    align-items: center;
    width: 94px;
    height: 30px;
    border: 1px solid #5f5f5f;
    border-radius: 3px;
    color: #707070;
}

.stepper input {
    width: 71px;
    height: 28px;
    border: 3px solid #505050;
    border-right: 9px solid #505050;
    background: #464646;
    box-shadow: 1px 0 #5f5f5f;
}

.stepper svg {
    margin-left: 5px;
}

.layer-list {
    flex: 1;
    background: #4b4b4b;
}

.panel-foot {
    display: flex;
    align-items: center;
    justify-content: flex-end;
    gap: 23px;
    height: 46px;
    padding: 0 46px 2px 0;
    border-top: 2px solid #3e3e3e;
    border-bottom: 2px solid #3e3e3e;
    color: #9d9d9d;
}

.panel-foot svg {
    width: 24px;
    height: 24px;
}

.actions .panel-foot {
    gap: 27px;
    height: 43px;
    padding-bottom: 0;
}

.panel-foot .bright {
    color: #e0e0e0;
}

.fx {
    width: 24px;
    font-size: 24px;
    font-style: italic;
}

.panel-grip {
    height: 10px;
    background: repeating-linear-gradient(90deg, #404040 0 1px, transparent 1px 3px) center / 30px 4px no-repeat;
}

.actions-body {
    flex: 1;
    display: flex;
    min-height: 0;
}

.action-list {
    flex: 1;
    overflow: hidden;
    padding-top: 3px;
    list-style: none;
}

.action-list li {
    display: flex;
}

.on {
    display: flex;
    justify-content: center;
    width: 31px;
    padding-top: 8px;
    color: #e6e6e6;
    border-right: 1px solid #474747;
}

.on svg {
    width: 15px;
    height: 13px;
}

.dlg {
    display: flex;
    justify-content: center;
    width: 34px;
    padding-top: 6px;
    color: #e0e0e0;
}

.dlg svg {
    width: 18px;
    height: 18px;
}

.dlg i {
    width: 20px;
    height: 20px;
    border: 1px solid #494949;
    border-right-color: #6a6a6a;
    border-bottom-color: #6a6a6a;
}

.caret {
    width: 14px;
    height: 14px;
    margin: 10px 5px 0 53px;
    color: #c8c8c8;
}

.action .caret {
    margin-left: 29px;
}

.set .caret {
    margin-left: 5px;
}

.step {
    flex: 1;
    padding-left: 12px;
    box-shadow: inset 0 -2px #4c4c4c;
}

.action .step {
    padding-left: 8px;
}

.set .step {
    padding-left: 6px;
    box-shadow: none;
}

.name {
    display: flex;
    align-items: center;
    height: 35px;
}

.name kbd {
    margin-left: auto;
    margin-right: 12px;
    font: inherit;
}

.step p {
    line-height: 25px;
    white-space: nowrap;
}

.name + p {
    line-height: 24px;
}

.set-folder {
    width: 22px;
    height: 18px;
    margin-right: 14px;
}

.scrollbar {
    display: flex;
    flex-direction: column;
    align-items: center;
    width: 24px;
    padding: 15px 0 10px;
    background: #4b4b4b;
    color: #a0a0a0;
}

.scrollbar .up {
    transform: rotate(180deg);
}

.thumb {
    width: 18px;
    height: 227px;
    margin: 6px 0 auto;
    border-radius: 2px;
    background: #696969;
}

/* Preferences dialog */
.dialog {
    position: absolute;
    left: 1196px;
    top: 593px;
    display: flex;
    flex-direction: column;
    width: 1572px;
    height: 958px;
    overflow: hidden;
    background: var(--bg);
    border: 2px solid #1975bf;
    border-radius: 10px;
    box-shadow: 0 24px 48px rgba(0, 0, 0, 0.4);
    color: var(--label);
}

.dialog-title {
    display: flex;
    align-items: center;
    justify-content: space-between;
    height: 49px;
    padding: 0 21px 2px 10px;
    background: var(--accent);
    box-shadow: 0 0 0 2px var(--accent);
}

.dialog-title h1 {
    font-size: 24px;
    font-weight: 400;
    color: #fff;
}

.dialog-body {
    flex: 1;
    display: flex;
    padding: 14px 16px 16px 14px;
}

.pages {
    display: flex;
    flex-direction: column;
    gap: 3px;
    width: 242px;
    padding: 2px 1px;
    border: 1px solid #454545;
    font-size: 15px;
}

.pages a {
    height: 27px;
    line-height: 27px;
    padding-left: 5px;
    color: #f0f0f0;
}

.pages .selected {
    background: #6b6b6b;
}

.settings {
    flex: 1;
    display: flex;
    flex-direction: column;
    gap: 16px;
    margin: 0 28px 0 16px;
}

fieldset {
    padding: 12px 0 18px;
    border: 1px solid #454545;
}

fieldset.options {
    padding: 10px 0 14px;
}

legend {
    margin-left: 21px;
    padding: 0 11px 0 8px;
    color: var(--text);
}

.theme-row {
    display: flex;
    align-items: center;
    height: 51px;
    padding-left: 14px;
}

.theme-label {
    width: 135px;
}

.themes {
    display: flex;
    gap: 13px;
    margin-right: 26px;
}

.theme {
    appearance: none;
    width: 44px;
    height: 44px;
    border: 1px solid #444;
}

.theme:checked {
    outline: 3px solid #31b2ea;
}

.darkest { background: #323232; }
.dark { background: #535353; }
.light { background: #b8b8b8; }
.lightest { background: #f0f0f0; }

.w-highlight {
    margin-left: 9px;
}

.screen-head,
.screen-grid {
    display: grid;
    grid-template-columns: 211px 223px 152px;
    gap: 9px 17px;
    align-items: center;
}

.screen-head {
    margin: 12px 0 8px;
    text-align: center;
}

.screen-head span:first-child {
    grid-column: 2;
}

.screen-grid label,
.ui-grid label {
    text-align: right;
}

.note {
    display: flex;
    gap: 21px;
    margin-top: 20px;
}

.note p {
    line-height: 12px;
}

.note svg {
    color: #dedede;
}

.artboard-note {
    padding-left: 355px;
}

.restart-note {
    padding-left: 307px;
}

.ui-grid {
    display: grid;
    grid-template-columns: 211px 198px 191px 108px;
    gap: 14px 12px;
    align-items: center;
}

.ui-grid .scale-font {
    grid-column: 3 / 5;
    padding-left: 123px;
}

.option-grid {
    display: grid;
    grid-template-columns: 260px 300px;
    gap: 18px 0;
    padding-left: 12px;
}

.dialog-buttons {
    display: flex;
    flex-direction: column;
    gap: 18px;
    padding-top: 3px;
}

.dialog-buttons button {
    width: 89px;
    height: 36px;
    border: 1px solid #777;
    border-radius: 18px;
    color: var(--text);
}

.dialog-buttons .primary {
    border: 2px solid #dadada;
}

/* Taskbar */
.taskbar {
    display: grid;
    grid-template-columns: 1fr auto 1fr;
    align-items: center;
    height: 108px;
    padding-top: 2px;
    background: linear-gradient(90deg, #242220, #33241a 12%, #3a1f14 24%, #33241a 36%, #3a1f14 42%, #3a2014 64%, #36231a 76%, #3a1f14 88%, #3a1f14 96%, #222 98%);
}

.taskbar-apps {
    grid-column: 2;
    display: flex;
    gap: 6px;
}

.taskbar-apps button {
    position: relative;
    display: flex;
    align-items: center;
    justify-content: center;
    width: 60px;
    height: 95px;
    border-radius: 6px;
}

.taskbar-apps svg {
    width: 52px;
    height: 52px;
}

.taskbar-apps .focused {
    background: rgba(255, 255, 255, 0.07);
    box-shadow: inset 0 0 0 1px rgba(255, 255, 255, 0.06);
}

.running::after,
.focused::after {
    content: '';
    position: absolute;
    bottom: 1px;
    width: 14px;
    height: 5px;
    border-radius: 3px;
    background: #a89a93;
}

.focused::after {
    width: 36px;
    background: #4cc2ff;
}

.tray {
    display: flex;
    align-items: center;
    justify-content: flex-end;
    gap: 14px;
    padding-right: 29px;
}

.tray svg {
    width: 24px;
    height: 24px;
}

.tray-line {
    fill: none;
    stroke: #fff;
    stroke-width: 1.8;
}

.clock {
    margin-left: 9px;
    line-height: 23px;
    text-align: right;
    color: #fff;
}
```
